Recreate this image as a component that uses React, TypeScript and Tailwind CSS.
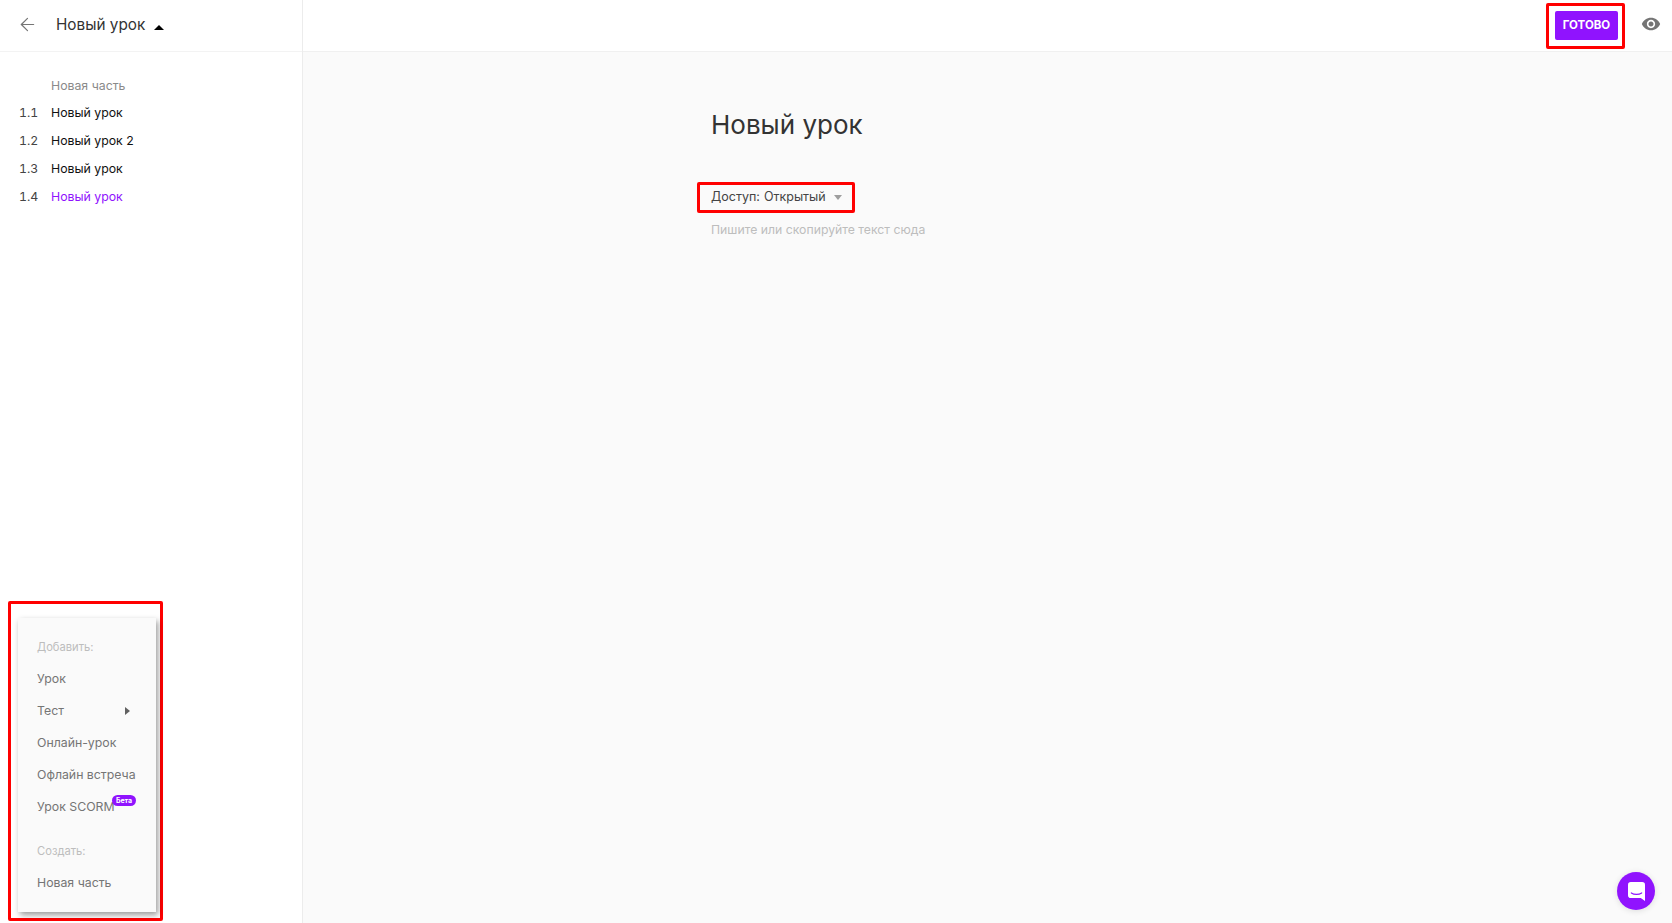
import { ArrowLeft } from "lucide-react";

const lessons = [
  { num: "1.1", title: "Новый урок" },
  { num: "1.2", title: "Новый урок 2" },
  { num: "1.3", title: "Новый урок" },
  { num: "1.4", title: "Новый урок", active: true },
];

const AddMenu = () => (
  <div className="absolute left-[8px] top-[601px] w-[155px] h-[320px] border-[3px] border-[#ff0000] rounded-[2px] pl-[7px] pt-[14px]">
    <div className="w-[138px] h-[294px] bg-[#fafafa] shadow-[2px_3px_6px_rgba(0,0,0,0.4)] pl-[19px] pt-[20px] text-[12.3px] text-[#757575]">
      <div className="h-[18px] leading-[18px] text-[#bdbdbd] text-[11.2px]">Добавить:</div>
      <div className="h-[32px] mt-[7px] leading-[32px]">Урок</div>
      <div className="h-[32px] leading-[32px] flex items-center">
        <span>Тест</span>
        <span className="ml-[61px] border-y-[4px] border-l-[5px] border-y-transparent border-l-[#616161]"></span>
      </div>
      <div className="h-[32px] leading-[32px]">Онлайн-урок</div>
      <div className="h-[32px] leading-[32px] whitespace-nowrap">Офлайн встреча</div>
      <div className="h-[32px] leading-[32px] relative whitespace-nowrap">
        Урок SCORM
        <span className="absolute left-[75px] top-[4px] w-[24px] h-[11px] rounded-full bg-[#9013fe] text-white text-[7px] leading-[11px] font-bold text-center">Бета</span>
      </div>
      <div className="h-[18px] mt-[19px] leading-[18px] text-[#bdbdbd] text-[11.2px]">Создать:</div>
      <div className="h-[32px] mt-[7px] leading-[32px]">Новая часть</div>
    </div>
  </div>
);

export default function App() {
  return (
    <div className="flex h-screen w-full overflow-hidden bg-white font-['Inter','Liberation_Sans',sans-serif]">
      <aside className="relative w-[303px] shrink-0 border-r border-[#ececec] bg-white">
        <div className="h-[52px] border-b border-[#f3f3f3] flex items-center pl-[17px]">
          <ArrowLeft className="w-[21px] h-[21px] text-[#757575] -mt-[2px]" strokeWidth={1.4} />
          <span className="ml-[18px] text-[15.3px] text-[#333333]">Новый урок</span>
          <span className="ml-[9px] mt-[3px] border-x-[5px] border-b-[5px] border-x-transparent border-b-black"></span>
        </div>
        <div className="pt-[20px] text-[12.3px]">
          <div className="pl-[51px] h-[27px] leading-[28px] text-[#8a8a8a]">Новая часть</div>
          {lessons.map((l) => (
            <div key={l.num} className="flex h-[28px] leading-[28px] pl-[19px]">
              <span className="w-[32px] text-[#444444] tabular-nums">{l.num}</span>
              <span className={l.active ? "text-[#9013fe]" : "text-[#111111]"}>{l.title}</span>
            </div>
          ))}
        </div>
        <AddMenu />
      </aside>

      <main className="relative flex-1 flex flex-col bg-[#fafafa]">
        <header className="h-[52px] shrink-0 bg-white border-b border-[#f0f0f0] flex items-start justify-end pr-[11px] pt-[3px]">
          <div className="border-[3px] border-[#ff0000] rounded-[2px] w-[79px] h-[46px] pl-[6px] pt-[5px]">
            <button className="w-[63px] h-[29px] rounded-[2px] bg-[#9013fe] text-white text-[11.5px] font-bold">ГОТОВО</button>
          </div>
          <svg viewBox="0 0 24 24" className="w-[20px] h-[20px] ml-[16px] mt-[11px] fill-[#757575]">
            <path d="M12 4.5C7 4.5 2.73 7.61 1 12c1.73 4.39 6 7.5 11 7.5s9.27-3.11 11-7.5c-1.73-4.39-6-7.5-11-7.5zM12 17c-2.76 0-5-2.24-5-5s2.24-5 5-5 5 2.24 5 5-2.24 5-5 5zm0-8c-1.66 0-3 1.34-3 3s1.34 3 3 3 3-1.34 3-3-1.34-3-3-3z" />
          </svg>
        </header>

        <div className="pl-[408px] pt-[55px]">
          <h1 className="text-[26px] leading-[36px] text-[#333333]">Новый урок</h1>
          <div className="-ml-[14px] mt-[39px] w-[158px] h-[31px] border-[3px] border-[#ff0000] rounded-[2px] flex items-center pl-[11px] text-[12.5px] text-[#444444]">
            <span>Доступ:</span>
            <span className="ml-[4px]">Открытый</span>
            <span className="ml-[8px] border-x-[4.5px] border-t-[5px] border-x-transparent border-t-[#9e9e9e]"></span>
          </div>
          <p className="mt-[9px] text-[12.25px] leading-[16px] text-[#bdbdbd]">Пишите или скопируйте текст сюда</p>
        </div>

        <button className="absolute right-[17px] bottom-[13px] w-[38px] h-[38px] rounded-full bg-[#9013fe] shadow-[0_1px_6px_rgba(0,0,0,0.12)] flex items-center justify-center">
          <svg viewBox="0 0 18 20" className="w-[17px] h-[19px]">
            <path d="M3 0h12a3 3 0 0 1 3 3v17l-4.5-3H3a3 3 0 0 1-3-3V3a3 3 0 0 1 3-3z" fill="#fff" />
            <path d="M3.5 11.5c3 2 8 2 11 0" fill="none" stroke="#9013fe" strokeWidth="1.2" strokeLinecap="round" />
          </svg>
        </button>
      </main>
    </div>
  );
}
